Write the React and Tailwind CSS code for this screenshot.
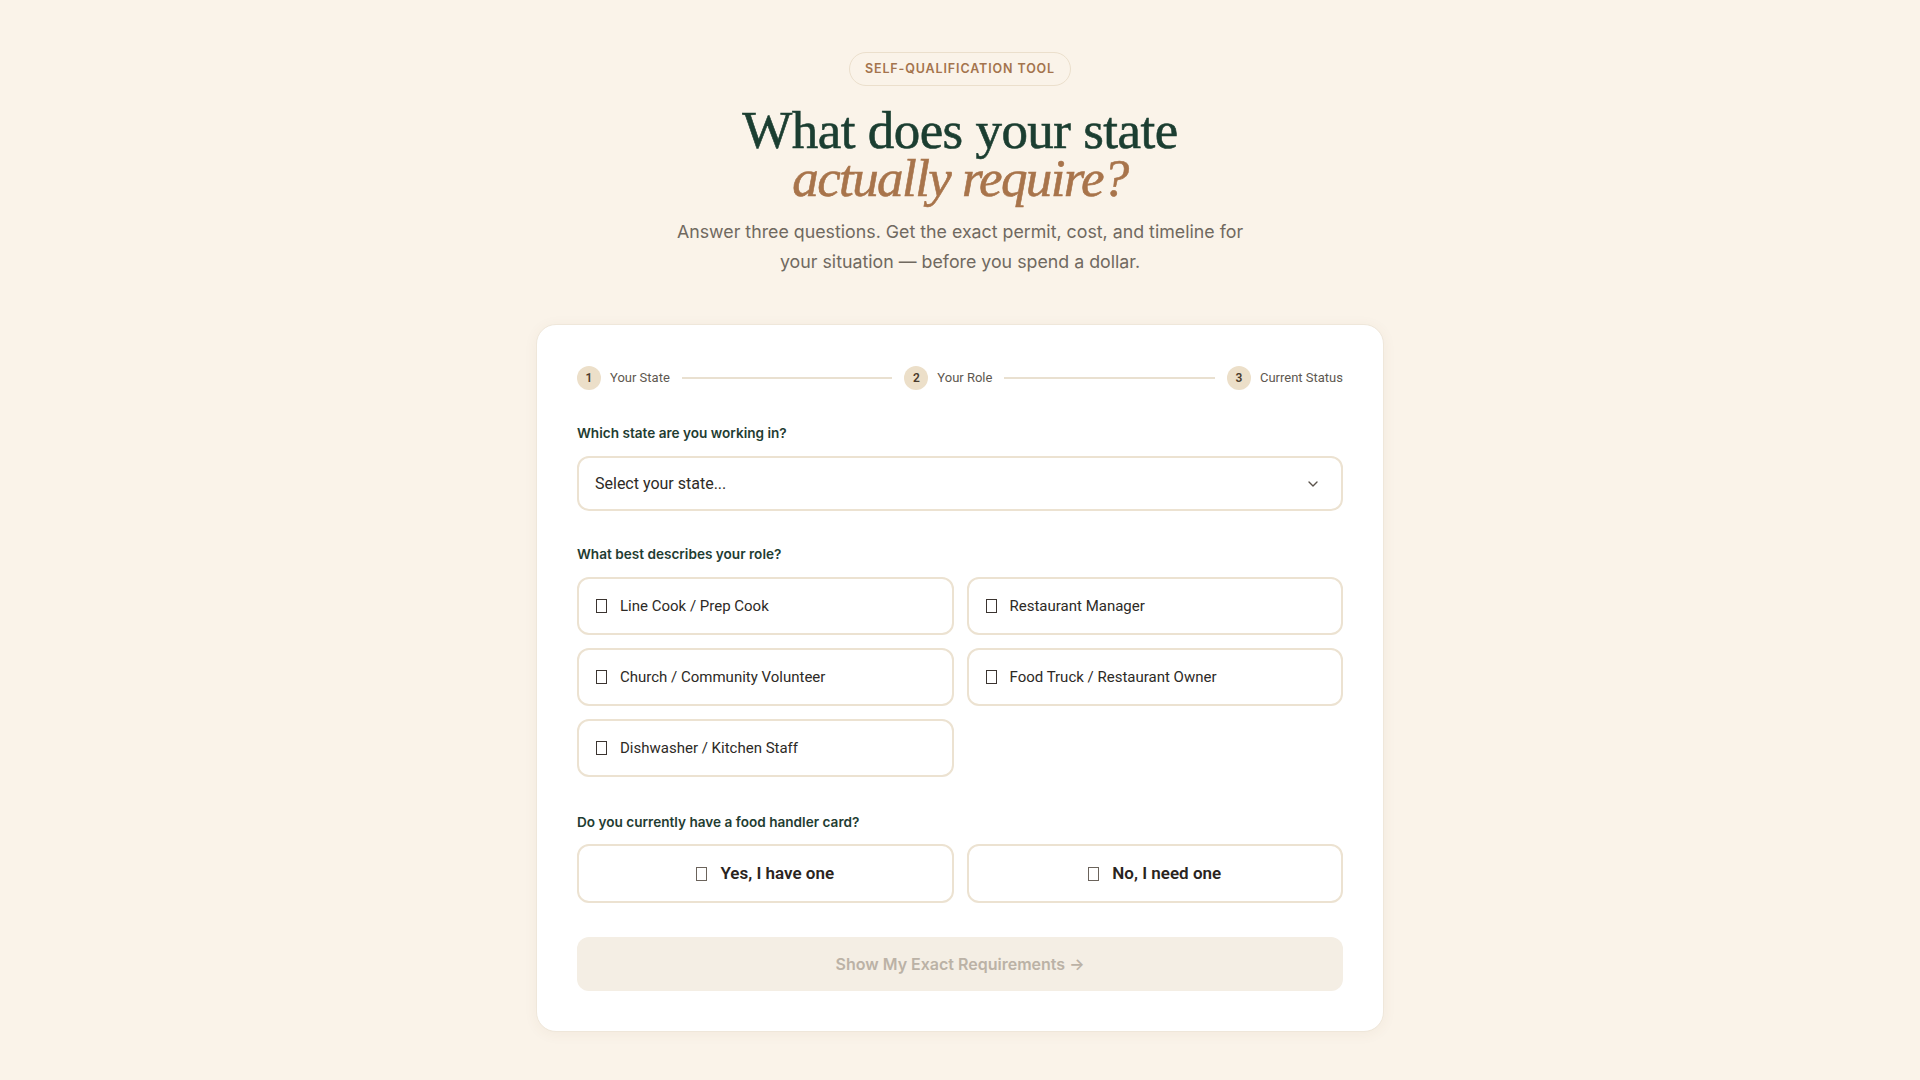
import { ChevronDown } from 'lucide-react'

const sans = { fontFamily: 'Roboto, Inter, "Noto Sans", sans-serif' }
const inter = { fontFamily: 'Inter, "Noto Sans", sans-serif' }

function Tofu({ className = '' }) {
  return <span className={`inline-block w-[11px] h-[14px] border border-[#3b3430] shrink-0 ${className}`} />
}

function Step({ n, label }) {
  return (
    <div className="flex items-center gap-[9px] shrink-0">
      <span className="w-[24px] h-[24px] rounded-full bg-[#ecdfc9] text-[#4a3b2c] text-[12px] font-semibold flex items-center justify-center">
        {n}
      </span>
      <span className="text-[13px] text-[#5e5850]">{label}</span>
    </div>
  )
}

function Label({ children, className = '' }) {
  return (
    <p className={`text-[13.6px] leading-[20px] font-semibold text-[#1f3d32] ${className}`} style={inter}>
      {children}
    </p>
  )
}

function Option({ label }) {
  return (
    <button className="h-[58px] rounded-[12px] border-2 border-[#ece2d1] bg-white flex items-center gap-[13px] px-[17px] text-left text-[15px] text-[#2d2a26]">
      <Tofu />
      {label}
    </button>
  )
}

export default function App() {
  const roles = [
    'Line Cook / Prep Cook',
    'Restaurant Manager',
    'Church / Community Volunteer',
    'Food Truck / Restaurant Owner',
    'Dishwasher / Kitchen Staff',
  ]

  return (
    <div className="min-h-screen bg-[#faf3e9] flex flex-col items-center pt-[52px] pb-16" style={sans}>
      <span
        className="h-[34px] px-[15px] rounded-full border border-[#ebdfcc] text-[#a4744d] text-[12.5px] font-semibold tracking-[0.07em] flex items-center"
        style={inter}
      >
        SELF-QUALIFICATION TOOL
      </span>

      <h1
        className="mt-[20px] text-center text-[53px] leading-[48px] tracking-[-0.01em]"
        style={{ fontFamily: '"Liberation Serif", "DejaVu Serif", serif' }}
      >
        <span className="block text-[#1b3e31] [-webkit-text-stroke:0.6px_#1b3e31]">What does your state</span>
        <span className="block italic text-[#a8744b] tracking-[-0.03em] [-webkit-text-stroke:0.6px_#a8744b]">actually require?</span>
      </h1>

      <p className="mt-[15px] w-[572px] text-center text-[17.8px] leading-[30px] text-[#706960]" style={inter}>
        Answer three questions. Get the exact permit, cost, and timeline for your situation — before you spend a dollar.
      </p>

      <div className="mt-[47px] w-[848px] bg-white rounded-[20px] border border-[#efe7da] shadow-[0_2px_14px_rgba(120,90,50,0.06)] px-[40px] pt-[41px] pb-[40px]">
        <div className="flex items-center gap-[12px]">
          <Step n="1" label="Your State" />
          <div className="flex-1 h-[2px] bg-[#e9e0d0]" />
          <Step n="2" label="Your Role" />
          <div className="flex-1 h-[2px] bg-[#e9e0d0]" />
          <Step n="3" label="Current Status" />
        </div>

        <Label className="mt-[33px]">Which state are you working in?</Label>
        <div className="mt-[13px] h-[55px] rounded-[12px] border-2 border-[#ece2d1] flex items-center justify-between pl-[16px] pr-[20px]">
          <span className="text-[16px] text-[#2d2a26]">Select your state...</span>
          <ChevronDown size={16} strokeWidth={2} className="text-[#5a524a]" />
        </div>

        <Label className="mt-[33px]">What best describes your role?</Label>
        <div className="mt-[13px] grid grid-cols-2 gap-x-[13px] gap-y-[13px]">
          {roles.map((r) => (
            <Option key={r} label={r} />
          ))}
        </div>

        <Label className="mt-[35px]">Do you currently have a food handler card?</Label>
        <div className="mt-[12px] grid grid-cols-2 gap-[13px]">
          {['Yes, I have one', 'No, I need one'].map((t) => (
            <button
              key={t}
              className="h-[59px] rounded-[12px] border-2 border-[#ece2d1] bg-white flex items-center justify-center gap-[13px] text-[17px] font-semibold text-[#2a2420]"
            >
              <Tofu className="w-[10px] h-[12px] border-[#6b635b]" />
              {t}
            </button>
          ))}
        </div>

        <button
          className="mt-[34px] w-full h-[54px] rounded-[12px] bg-[#f4eee4] text-[16px] font-semibold text-[#bbb2a6]"
          style={inter}
        >
          Show My Exact Requirements →
        </button>
      </div>
    </div>
  )
}
